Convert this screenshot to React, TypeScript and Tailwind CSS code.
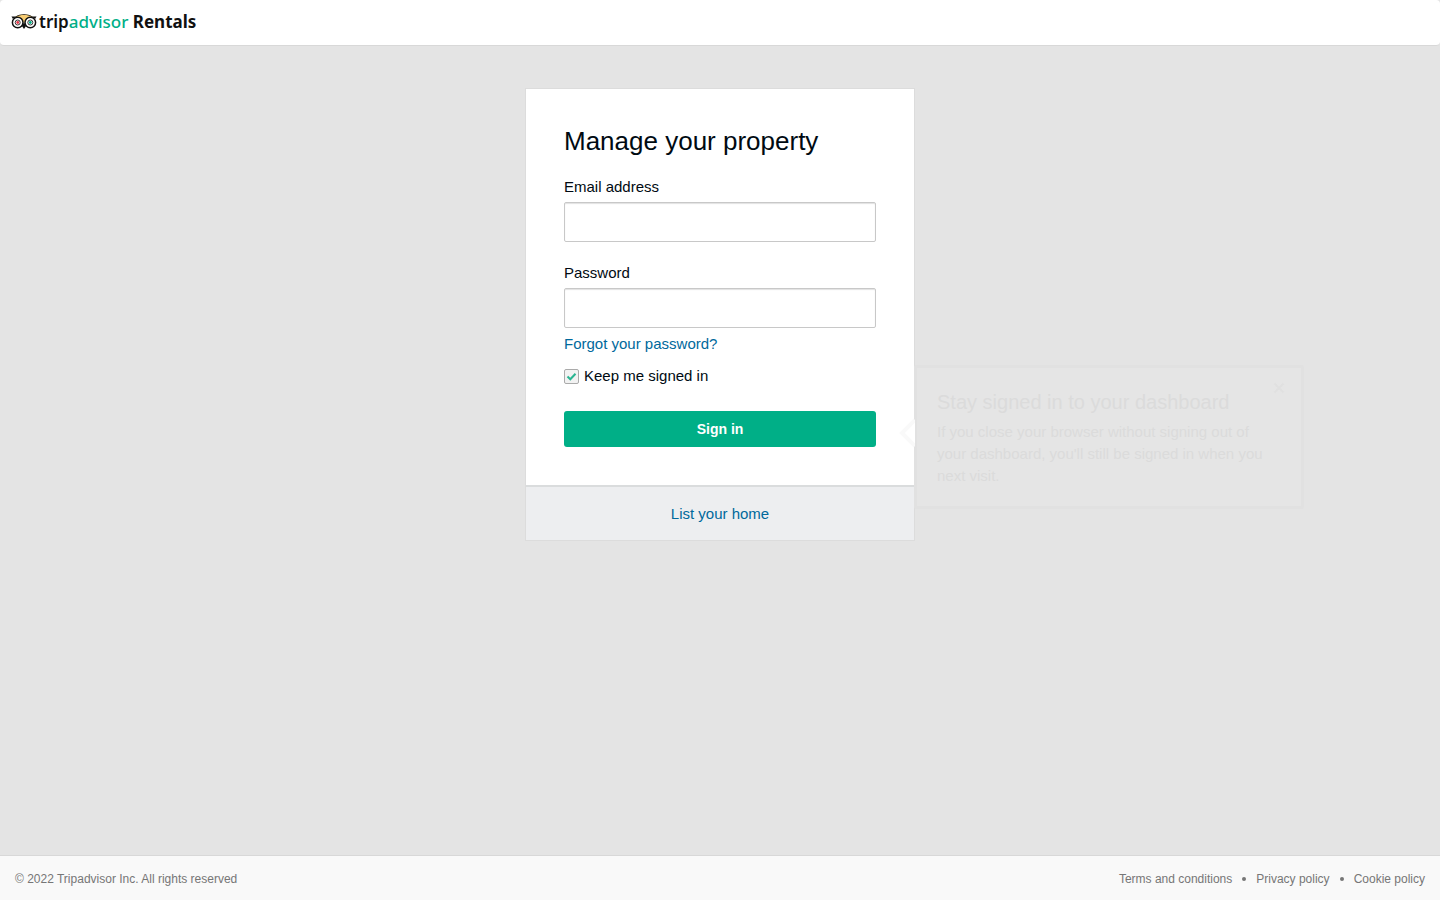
import { useState } from "react";

function OwlMark() {
  return (
    <svg width="26" height="16" viewBox="0 0 26 16" aria-hidden="true">
      <path d="M4 3C7 1.200 10 .6 13 .6s6 .6 9 2.400l-5.500 1.500L13 9 9.500 4.500z" fill="#f7cc72" />
      <path
        d="M.4 2.600h4.200C7 1 10 .2 13 .2s6 .8 8.400 2.400h4.200c-.6.700-1 1.400-1.200 2.100l-2.800-1.300C19 1.700 16 1.100 13 1.100s-6 .6-8.600 2.300L1.600 4.700C1.400 4 1 3.300.4 2.600z"
        fill="#111"
      />
      <path d="M10.800 11.800 13 15l2.200-3.200L13 8.500z" fill="#111" />
      <circle cx="6.700" cy="8.500" r="5.300" fill="#fff" stroke="#111" strokeWidth="1.500" />
      <circle cx="19.300" cy="8.500" r="5.300" fill="#fff" stroke="#111" strokeWidth="1.500" />
      <circle cx="6.700" cy="8.500" r="2.500" fill="#fff" stroke="#222" strokeWidth=".9" />
      <circle cx="19.300" cy="8.500" r="2.500" fill="#fff" stroke="#222" strokeWidth=".9" />
      <circle cx="6.700" cy="8.500" r="1.400" fill="#e8364a" />
      <circle cx="19.300" cy="8.500" r="1.400" fill="#00af87" />
    </svg>
  );
}

function Header() {
  return (
    <header className="flex h-[46px] items-center rounded-sm border-b border-[#d8d8d8] bg-white px-[11px] pb-px">
      <a href="#home" className="flex items-center gap-[2px] font-['Noto_Sans',sans-serif] text-[17px] leading-5 font-medium text-[#111]">
        <OwlMark />
        <span className="whitespace-pre">
          <span className="font-semibold">trip</span>
          <span className="text-[#00af87]">advisor</span> <span className="font-bold">Rentals</span>
        </span>
      </a>
    </header>
  );
}

function Field({ id, label, type }: { id: string; label: string; type: string }) {
  return (
    <div className="flex flex-col gap-[5px]">
      <label htmlFor={id}>{label}</label>
      <input
        id={id}
        type={type}
        className="h-10 w-full rounded-xs border border-[#c8c8c8] bg-white px-2.5 shadow-[inset_0_1px_1px_#e2e2e2] outline-none focus:border-[#00af87]"
      />
    </div>
  );
}

function StaySignedInTip() {
  return (
    <aside className="absolute top-[276px] left-full w-[390px] rounded-xs border-3 border-[#e1e1e1] bg-[#e5e5e5] px-5 pt-[22px] pb-[19px] text-[#dbdbdb]">
      <svg className="absolute top-[50px] -left-[18px]" width="16" height="30" viewBox="0 0 16 30" aria-hidden="true">
        <path d="M16 2 3 15l13 13" fill="#fff" stroke="#f9f9f9" strokeWidth="4" />
      </svg>
      <h2 className="text-xl leading-6">Stay signed in to your dashboard</h2>
      <p className="mt-[7px] leading-[22px]">
        If you close your browser without signing out of your dashboard, you'll still be signed in when you next visit.
      </p>
      <button type="button" aria-label="Close" className="absolute top-[14px] right-4">
        <svg width="12" height="12" viewBox="0 0 12 12" aria-hidden="true">
          <path d="m1.500 1.500 9 9m0-9-9 9" stroke="#e0e0e0" strokeWidth="2" />
        </svg>
      </button>
    </aside>
  );
}

export default function App() {
  const [keep, setKeep] = useState(true);
  return (
    <div className="flex min-h-screen flex-col overflow-x-hidden bg-[#e4e4e4] font-['Liberation_Sans',Arial,sans-serif] text-[15px] leading-5 text-[#000a12]">
      <Header />
      <main className="flex flex-1 flex-col items-center py-[42px]">
        <div className="relative w-full max-w-[390px] border border-[#dcdcdc] bg-white">
          <form className="flex flex-col p-[38px]" onSubmit={(e) => e.preventDefault()}>
            <h1 className="mb-[22px] text-[26px] leading-7">Manage your property</h1>
            <div className="flex flex-col gap-[21px]">
              <Field id="email" label="Email address" type="email" />
              <Field id="password" label="Password" type="password" />
            </div>
            <a href="#forgot" className="mt-1.5 self-start text-[#00699c]">
              Forgot your password?
            </a>
            <label className="mt-3 flex items-center gap-[5px] self-start">
              <span className="grid size-[15px]">
                <input
                  type="checkbox"
                  checked={keep}
                  onChange={(e) => setKeep(e.target.checked)}
                  className="col-start-1 row-start-1 size-[15px] appearance-none rounded-xs border border-[#aaa] bg-[#f2f2f2]"
                />
                {keep && (
                  <svg className="pointer-events-none col-start-1 row-start-1" width="15" height="15" viewBox="0 0 15 15" aria-hidden="true">
                    <path d="m3.500 7.500 2.800 2.800 5.200-5.600" fill="none" stroke="#2bb592" strokeWidth="2" />
                  </svg>
                )}
              </span>
              Keep me signed in
            </label>
            <button type="submit" className="mt-[25px] h-9 w-full rounded-[3px] bg-[#00af87] text-sm font-bold text-white">
              Sign in
            </button>
          </form>
          <div className="flex h-[55px] items-center justify-center border-t-2 border-[#dadcdd] bg-[#edeef0]">
            <a href="#list" className="text-[#00699c]">
              List your home
            </a>
          </div>
          <StaySignedInTip />
        </div>
      </main>
      <footer className="flex h-[45px] items-center justify-between border-t border-[#d8d8d8] bg-[#f9f9f9] px-[15px] pt-[2px] text-xs leading-4 text-[#767676]">
        <p>© 2022 Tripadvisor Inc. All rights reserved</p>
        <nav className="flex items-center gap-2.5">
          <a href="#terms">Terms and conditions</a>
          <span className="size-1 rounded-full bg-[#767676]" />
          <a href="#privacy">Privacy policy</a>
          <span className="size-1 rounded-full bg-[#767676]" />
          <a href="#cookies">Cookie policy</a>
        </nav>
      </footer>
    </div>
  );
}
